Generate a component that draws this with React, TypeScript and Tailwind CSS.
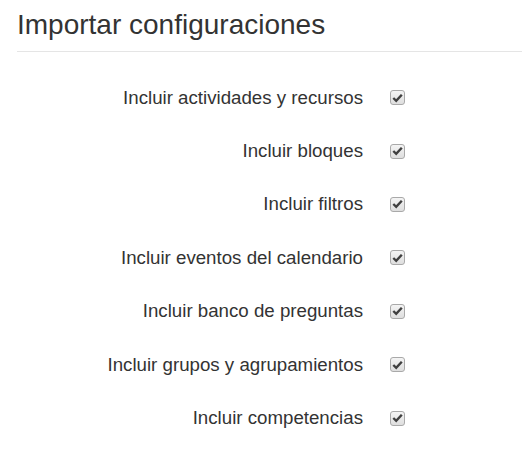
const items = [
  "Incluir actividades y recursos",
  "Incluir bloques",
  "Incluir filtros",
  "Incluir eventos del calendario",
  "Incluir banco de preguntas",
  "Incluir grupos y agrupamientos",
  "Incluir competencias",
];

function CheckedBox() {
  return (
    <span className="inline-flex h-[15px] w-[15px] items-center justify-center rounded-[3px] border border-[#a9a9a9] bg-gradient-to-b from-[#f4f4f4] to-[#dedede]">
      <svg width="11" height="10" viewBox="0 0 11 10">
        <path d="M1.3 5 L4.2 7.8 L9.8 1.8" fill="none" stroke="#3f3f3f" strokeWidth="2.4" />
      </svg>
    </span>
  );
}

export default function App() {
  return (
    <div className="min-h-[462px] w-[522px] bg-white text-[#333] font-['Liberation_Sans',Arial,sans-serif]">
      <div className="pl-[17px] pt-[6px]">
        <h2 className="text-[28px] leading-[38px] pb-[7px] border-b border-[#e5e5e5]">Importar configuraciones</h2>
      </div>
      <div className="pt-[19px]">
        {items.map((label) => (
          <div key={label} className="flex h-[53.4px] items-center">
            <div className="w-[363px] text-right text-[18.7px] leading-[22px]">{label}</div>
            <div className="ml-[27px] flex">
              <CheckedBox />
            </div>
          </div>
        ))}
      </div>
    </div>
  );
}
